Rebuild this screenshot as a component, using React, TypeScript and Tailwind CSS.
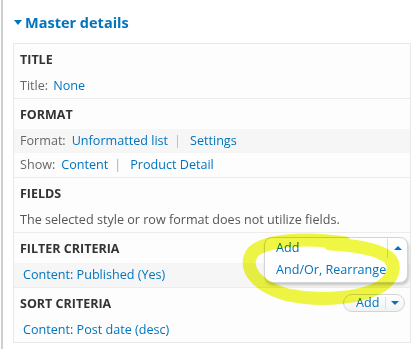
import React from "react";

const font = { fontFamily: '"Open Sans", "Noto Sans", sans-serif' };

function Section({
  title,
  action,
  children,
}: {
  title: string;
  action?: React.ReactNode;
  children: React.ReactNode;
}) {
  return (
    <div className="border-b border-[#ececec] last:border-b-0">
      <div className="relative flex h-[30px] items-center justify-between pl-[6px] pr-[5px]">
        <span className="relative top-[1px] text-[12.5px] font-bold text-[#333]">
          {title}
        </span>
        {action}
      </div>
      {children}
    </div>
  );
}

function Row({ gray, children }: { gray?: boolean; children: React.ReactNode }) {
  return (
    <div
      className={
        "flex h-[24px] items-center pl-[6px] text-[12.6px] " +
        (gray ? "bg-[#f6f6f6]" : "")
      }
    >
      {children}
    </div>
  );
}

function AddButton() {
  return (
    <div className="flex h-[18px] w-[62px] items-center rounded-full border border-[#d4d4d4] bg-gradient-to-b from-white to-[#f2f2f2] text-[12.6px]">
      <span className="flex-1 pl-[12px] text-[#0074bd]">Add</span>
      <span className="h-[12px] w-px bg-[#ddd]" />
      <span className="flex w-[18px] justify-center">
        <span className="h-0 w-0 border-x-[4px] border-t-[4px] border-x-transparent border-t-[#0074bd]" />
      </span>
    </div>
  );
}

function OpenDropdown() {
  return (
    <div className="absolute right-[2px] top-[4px] z-10 h-[46px] w-[144px] rounded-[8px] border border-[#d4d4d4] bg-white text-[12.6px] shadow-[1px_2px_3px_rgba(0,0,0,0.2)]">
      <div className="flex h-[20px] items-center">
        <span className="flex-1 pl-[11px] text-[#0074bd]">Add</span>
        <span className="h-[20px] w-px bg-[#ddd]" />
        <span className="flex w-[19px] justify-center">
          <span className="h-0 w-0 border-x-[4px] border-b-[4px] border-x-transparent border-b-[#0074bd]" />
        </span>
      </div>
      <div className="flex h-[24px] items-center pl-[11px] text-[#0074bd]">
        And/Or, Rearrange
      </div>
    </div>
  );
}

export default function App() {
  return (
    <div
      className="relative h-[349px] w-[419px] overflow-hidden bg-white pl-px"
      style={font}
    >
      <div className="h-full border-l-2 border-[#cfcfcf]">
        {/* Header */}
        <div className="flex h-[43px] items-center pl-[11px] pt-[2px]">
          <span className="mr-[3px] h-0 w-0 border-x-[4px] border-t-[5px] border-x-transparent border-t-[#0074bd]" />
          <span className="text-[14.5px] font-bold text-[#0074bd]">
            Master details
          </span>
        </div>

        {/* Panel */}
        <div className="ml-[10px] w-[398px] border border-[#e8e8e8] bg-[#fdfdfd]">
          <Section title="TITLE">
            <Row>
              <span className="text-[#666]">Title:</span>
              <span className="ml-[5px] text-[#0074bd]">None</span>
            </Row>
          </Section>

          <Section title="FORMAT">
            <Row gray>
              <span className="text-[#666]">Format:</span>
              <span className="ml-[6px] text-[#0074bd]">Unformatted list</span>
              <span className="ml-[6px] text-[#e6a5a5]">|</span>
              <span className="ml-[9px] text-[#0074bd]">Settings</span>
            </Row>
            <Row>
              <span className="text-[#666]">Show:</span>
              <span className="ml-[6px] text-[#0074bd]">Content</span>
              <span className="ml-[6px] text-[#aaa]">|</span>
              <span className="ml-[9px] text-[#0074bd]">Product Detail</span>
            </Row>
          </Section>

          <Section title="FIELDS">
            <Row>
              <span className="text-[#555]">
                The selected style or row format does not utilize fields.
              </span>
            </Row>
          </Section>

          <Section title="FILTER CRITERIA" action={<OpenDropdown />}>
            <Row gray>
              <span className="pl-[3px] text-[#0074bd]">Content: Published (Yes)</span>
            </Row>
          </Section>

          <Section title="SORT CRITERIA" action={<AddButton />}>
            <Row>
              <span className="pl-[3px] text-[#0074bd]">Content: Post date (desc)</span>
            </Row>
          </Section>
        </div>
      </div>

      {/* Yellow highlight scribble */}
      <svg
        className="pointer-events-none absolute left-0 top-0 z-20 mix-blend-multiply"
        width="419"
        height="349"
      >
        <path
          d="M 345 243 C 305 237, 266 240, 253 252 C 243 265, 252 285, 288 295 C 322 302, 364 298, 383 285 C 397 274, 396 261, 385 255 C 372 248, 352 245, 330 244"
          fill="none"
          stroke="#eef534"
          strokeWidth="13"
          strokeLinecap="round"
          opacity="0.92"
        />
      </svg>
    </div>
  );
}
